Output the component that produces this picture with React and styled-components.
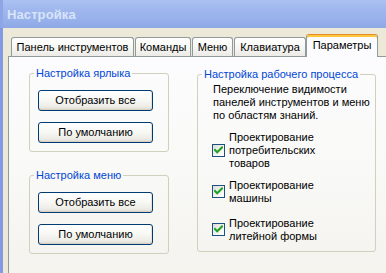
import React from "react";
import styled, { createGlobalStyle } from "styled-components";

const Global = createGlobalStyle`
  html, body { margin: 0; padding: 0; background: #ECE9D8; }
  body { font-family: "Liberation Sans", Arial, sans-serif; font-size: 11px; }
  * { box-sizing: border-box; }
`;

const Window = styled.div`
  width: 386px;
  height: 273px;
  overflow: hidden;
  display: flex;
  flex-direction: column;
  background: #ECE9D8;
`;

const TitleBar = styled.div`
  height: 28px;
  flex: none;
  display: flex;
  align-items: center;
  padding: 1px 0 0 4px;
  background: linear-gradient(180deg, #ABC2F1 0%, #A0B8EE 30%, #98B1EB 70%, #8EA8E6 100%);
  border-left: 3px solid #8FA6E6;
`;

const Title = styled.span`
  font-family: "Liberation Sans", Arial, sans-serif;
  font-weight: bold;
  font-size: 13px;
  color: #D8E4F9;
  letter-spacing: 0.1px;
`;

const Body = styled.div`
  flex: 1;
  display: flex;
  flex-direction: column;
  border-left: 3px solid #8299E4;
  padding: 6px 0 0 5px;
  min-height: 0;
`;

const TabRow = styled.div`
  display: flex;
  align-items: flex-end;
  gap: 1px;
  height: 22px;
  margin-left: 3px;
  flex: none;
`;

const Tab = styled.div`
  width: ${(p) => p.$w}px;
  height: ${(p) => (p.$active ? 23 : 19)}px;
  margin-bottom: ${(p) => (p.$active ? -1 : 0)}px;
  margin-left: ${(p) => (p.$active ? -1 : 0)}px;
  position: relative;
  z-index: ${(p) => (p.$active ? 2 : 1)};
  display: flex;
  align-items: center;
  justify-content: center;
  padding-bottom: ${(p) => (p.$active ? 2 : 0)}px;
  border: 1px solid #919B9C;
  border-bottom: none;
  border-top-color: ${(p) => (p.$active ? "#E68B2C" : "#919B9C")};
  border-radius: 3px 3px 0 0;
  background: ${(p) =>
    p.$active ? "#FCFCFE" : "linear-gradient(180deg, #FFFFFF 0%, #F7F7F4 50%, #ECEBE6 100%)"};
  box-shadow: ${(p) => (p.$active ? "inset 0 2px 0 #FFC83C" : "none")};
  color: #000;
  font-size: 11px;
  line-height: 13px;
  white-space: nowrap;
`;

const Panel = styled.div`
  flex: 1;
  width: 400px;
  border: 1px solid #919B9C;
  border-right: none;
  border-bottom: none;
  background: linear-gradient(180deg, #FCFCFE 0%, #F9F9F7 50%, #F4F3EE 100%);
  padding: 10px 0 0 20px;
  display: flex;
  align-items: flex-start;
  gap: 28px;
`;

const Column = styled.div`
  display: flex;
  flex-direction: column;
  gap: 17px;
  width: 140px;
`;

const Group = styled.fieldset`
  margin: 0;
  margin-top: ${(p) => p.$mt || 0}px;
  padding: 0;
  width: ${(p) => p.$w}px;
  border: 1px solid #D0D0BF;
  border-radius: 3px;
  min-width: 0;
`;

const Legend = styled.legend`
  margin-left: 4px;
  padding: 0 2px;
  color: #0046D5;
  font-size: 11px;
  line-height: 13px;
  white-space: nowrap;
`;

const ButtonStack = styled.div`
  display: flex;
  flex-direction: column;
  gap: 11px;
  padding: 10px 0 8px 8px;
`;

const Button = styled.button`
  width: 115px;
  height: 21px;
  padding: 0;
  border: 1px solid #003C74;
  border-radius: 3px;
  background: linear-gradient(180deg, #FFFFFF 0%, #F8F8F5 45%, #EEEDE7 80%, #DEDAD0 100%);
  font-family: "Liberation Sans", Arial, sans-serif;
  font-size: 11px;
  line-height: 13px;
  color: #000;
  box-shadow: inset 0 -1px 0 #D6D0C5, inset -1px 0 0 #E6E3DA;
`;

const Content = styled.div`
  padding: 2px 0 8px 15px;
  display: flex;
  flex-direction: column;
`;

const Text = styled.p`
  margin: 0;
  font-size: 11px;
  line-height: 13px;
  color: #000;
  white-space: nowrap;
`;

const CheckRow = styled.label`
  display: flex;
  align-items: center;
  gap: 4px;
  margin-top: ${(p) => p.$mt}px;
  margin-left: -1px;
`;

const Box = styled.span`
  width: 13px;
  height: 13px;
  flex: none;
  border: 1px solid #1C5180;
  background: linear-gradient(135deg, #DCDCD7 0%, #F5F5F3 60%, #FFFFFF 100%);
  display: flex;
  align-items: center;
  justify-content: center;
  margin-bottom: 1px;
`;

const LabelText = styled.span`
  width: 100px;
  font-size: 11px;
  line-height: 13px;
  color: #000;
`;

const Check = () => (
  <svg width="9" height="9" viewBox="0 0 9 9">
    <path d="M1 4 L3.2 6.3 L8 1.5" fill="none" stroke="#21A121" strokeWidth="2" strokeLinecap="square" />
  </svg>
);

const CheckItem = ({ mt, children }) => (
  <CheckRow $mt={mt}>
    <Box>
      <Check />
    </Box>
    <LabelText>{children}</LabelText>
  </CheckRow>
);

const tabs = [
  { label: "Панель инструментов", w: 123 },
  { label: "Команды", w: 56 },
  { label: "Меню", w: 41 },
  { label: "Клавиатура", w: 72 },
  { label: "Параметры", w: 72, active: true },
];

export default function App() {
  return (
    <>
      <Global />
      <Window>
        <TitleBar>
          <Title>Настройка</Title>
        </TitleBar>
        <Body>
          <TabRow>
            {tabs.map((t) => (
              <Tab key={t.label} $w={t.w} $active={t.active}>
                {t.label}
              </Tab>
            ))}
          </TabRow>
          <Panel>
            <Column>
              <Group $w={140}>
                <Legend>Настройка ярлыка</Legend>
                <ButtonStack>
                  <Button>Отобразить все</Button>
                  <Button>По умолчанию</Button>
                </ButtonStack>
              </Group>
              <Group $w={140}>
                <Legend>Настройка меню</Legend>
                <ButtonStack>
                  <Button>Отобразить все</Button>
                  <Button>По умолчанию</Button>
                </ButtonStack>
              </Group>
            </Column>
            <Group $w={179} $mt={1}>
              <Legend>Настройка рабочего процесса</Legend>
              <Content>
                <Text>
                  Переключение видимости
                  <br />
                  панелей инструментов и меню
                  <br />
                  по областям знаний.
                </Text>
                <CheckItem mt={9}>Проектирование потребительских товаров</CheckItem>
                <CheckItem mt={9}>Проектирование машины</CheckItem>
                <CheckItem mt={12}>Проектирование литейной формы</CheckItem>
              </Content>
            </Group>
          </Panel>
        </Body>
      </Window>
    </>
  );
}
